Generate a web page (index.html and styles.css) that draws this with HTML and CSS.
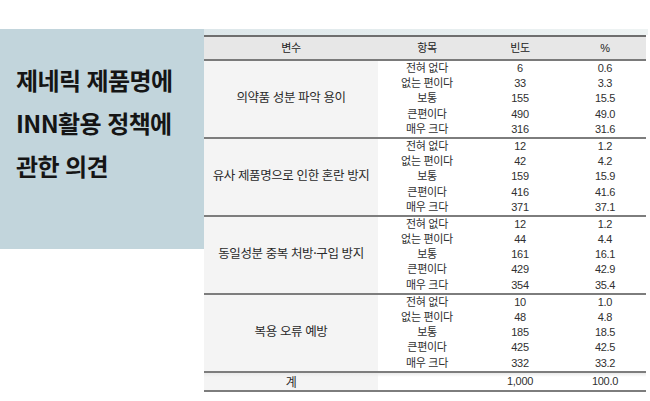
FILE: index.html
```html
<!DOCTYPE html>
<html lang="ko">
<head>
<meta charset="utf-8">
<link rel="stylesheet" href="styles.css">
</head>
<body>
<div class="page">
  <aside class="panel">
    <h1 class="title">제네릭 제품명에<br>INN활용 정책에<br>관한 의견</h1>
  </aside>
  <section class="content">
    <div class="band"></div>
    <div class="table">
      <div class="head">
        <div>변수</div><div>항목</div><div>빈도</div><div>%</div>
      </div>
      <div class="group">
        <div class="var">의약품 성분 파악 용이</div>
        <div>전혀 없다</div><div>6</div><div>0.6</div>
        <div>없는 편이다</div><div>33</div><div>3.3</div>
        <div>보통</div><div>155</div><div>15.5</div>
        <div>큰편이다</div><div>490</div><div>49.0</div>
        <div>매우 크다</div><div>316</div><div>31.6</div>
      </div>
      <div class="group">
        <div class="var">유사 제품명으로 인한 혼란 방지</div>
        <div>전혀 없다</div><div>12</div><div>1.2</div>
        <div>없는 편이다</div><div>42</div><div>4.2</div>
        <div>보통</div><div>159</div><div>15.9</div>
        <div>큰편이다</div><div>416</div><div>41.6</div>
        <div>매우 크다</div><div>371</div><div>37.1</div>
      </div>
      <div class="group">
        <div class="var">동일성분 중복 처방·구입 방지</div>
        <div>전혀 없다</div><div>12</div><div>1.2</div>
        <div>없는 편이다</div><div>44</div><div>4.4</div>
        <div>보통</div><div>161</div><div>16.1</div>
        <div>큰편이다</div><div>429</div><div>42.9</div>
        <div>매우 크다</div><div>354</div><div>35.4</div>
      </div>
      <div class="group">
        <div class="var">복용 오류 예방</div>
        <div>전혀 없다</div><div>10</div><div>1.0</div>
        <div>없는 편이다</div><div>48</div><div>4.8</div>
        <div>보통</div><div>185</div><div>18.5</div>
        <div>큰편이다</div><div>425</div><div>42.5</div>
        <div>매우 크다</div><div>332</div><div>33.2</div>
      </div>
      <div class="total">
        <div class="var">계</div><div></div><div>1,000</div><div>100.0</div>
      </div>
    </div>
  </section>
</div>
</body>
</html>
```

FILE: styles.css
```css
html, body {
  margin: 0;
  padding: 0;
  background: #ffffff;
}
body {
  font-family: "Noto Sans CJK KR", "Noto Sans", sans-serif;
  color: #2b2b2b;
  width: 650px;
  height: 401px;
  overflow: hidden;
}
.page {
  display: flex;
  align-items: flex-start;
  padding-top: 29px;
}
.panel {
  width: 204px;
  height: 220px;
  flex: none;
  background: #c2d5dc;
  box-sizing: border-box;
  padding: 29px 0 0 16px;
}
.title {
  margin: 0;
  font-size: 24px;
  line-height: 43px;
  font-weight: 700;
  color: #151515;
  letter-spacing: -0.6px;
  white-space: nowrap;
}
.content {
  width: 442px;
  flex: none;
}
.band {
  height: 6px;
  margin-right: -2px;
  background: linear-gradient(to right, #dde7ea, #eef3f3);
}
.table {
  font-family: "Liberation Sans", "Noto Sans CJK KR", sans-serif;
  font-size: 11px;
  letter-spacing: -0.3px;
  color: #303030;
}
.head, .group, .total {
  display: grid;
  grid-template-columns: 174px 98px 88px 82px;
  text-align: center;
}
.head {
  border-top: 2px solid #6f6f6f;
  border-bottom: 2px solid #7a7a7a;
  background: #e7e7e7;
  height: 22px;
  line-height: 22px;
  font-size: 11px;
  color: #222;
}
.group {
  grid-template-rows: repeat(5, 15.2px);
  line-height: 15.2px;
  border-bottom: 2px solid #7d7d7d;
}
.var {
  background: #f4f4f4;
  display: flex;
  align-items: center;
  justify-content: center;
  font-family: "Noto Sans CJK KR", sans-serif;
  font-size: 12.5px;
  color: #2a2a2a;
  letter-spacing: -0.4px;
}
.group .var {
  grid-row: 1 / 6;
  padding-bottom: 4px;
}
.total {
  height: 17px;
  line-height: 17px;
  border-bottom: 2px solid #7d7d7d;
  background: linear-gradient(to bottom, #e9e9e9, #ffffff 4px);
}
.total .var {
  font-size: 12px;
  background: linear-gradient(to bottom, #e9e9e9, #f4f4f4 4px);
}
```
